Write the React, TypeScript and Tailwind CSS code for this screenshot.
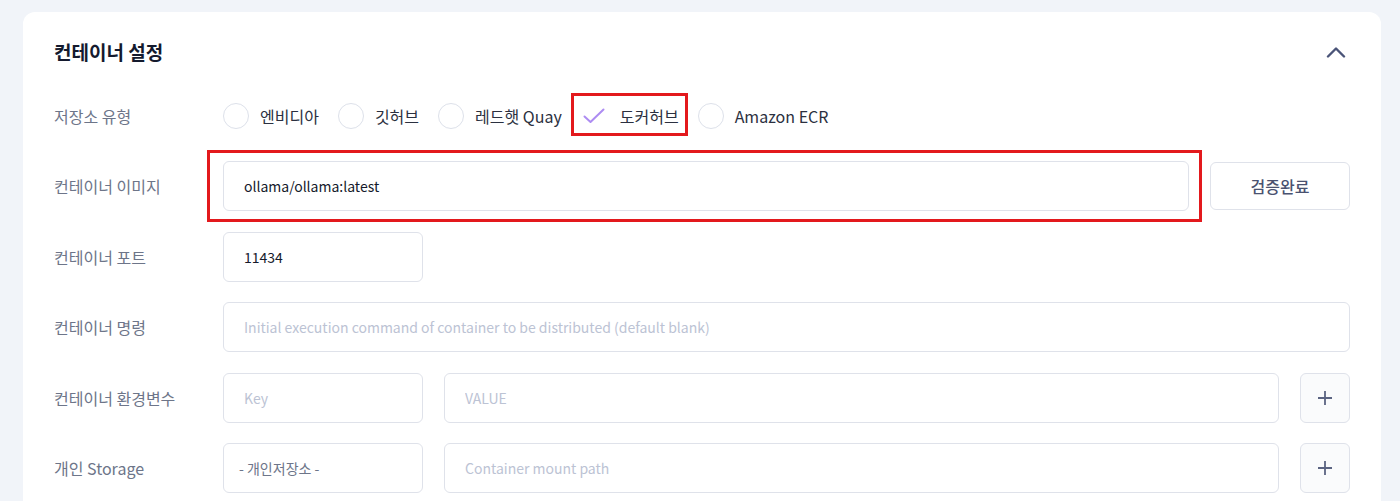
import React from "react";

const registries = [
  { id: "nvidia", label: "엔비디아" },
  { id: "github", label: "깃허브" },
  { id: "redhat", label: "레드햇 Quay" },
  { id: "docker", label: "도커허브" },
  { id: "ecr", label: "Amazon ECR" },
];

const inputBase =
  "h-[50px] rounded-[6px] border border-[#dfe2ea] bg-white px-[20px] text-[14px] text-[#151a2b] placeholder:text-[#bcc3d4] outline-none";

const Row = ({ label, children }: { label: string; children: React.ReactNode }) => (
  <div className="flex items-center">
    <div className="w-[169px] shrink-0 text-[16px] text-[#6d7589]">{label}</div>
    <div className="flex flex-1 items-center">{children}</div>
  </div>
);

const PlusButton = () => (
  <button className="ml-[21px] flex h-[50px] w-[50px] shrink-0 items-center justify-center rounded-[6px] border border-[#dfe2ea] bg-[#fafbfc]">
    <svg width="16" height="16" viewBox="0 0 16 16" fill="none">
      <path d="M8 1v14M1 8h14" stroke="#5b6482" strokeWidth="1.8" />
    </svg>
  </button>
);

const App = () => {
  const selected = "docker";

  return (
    <div className="min-h-[501px] bg-[#f1f4f9] pt-[12px] font-['Noto_Sans_CJK_KR','Noto_Sans',sans-serif]">
      <div className="ml-[23px] w-[1358px] rounded-t-[12px] bg-white px-[31px] pb-[24px]">
        {/* header */}
        <div className="flex h-[80px] items-center justify-between">
          <h2 className="text-[19px] font-bold text-[#141a2e]">컨테이너 설정</h2>
          <svg width="20" height="12" viewBox="0 0 20 12" fill="none" className="mr-[4px]">
            <path d="M2 10.5 10 2.5l8 8" stroke="#4a5478" strokeWidth="2.4" strokeLinecap="round" strokeLinejoin="round" />
          </svg>
        </div>

        <div className="flex flex-col gap-[20.5px]">
          {/* 저장소 유형 */}
          <div className="flex h-[48.5px] items-center">
            <div className="w-[169px] shrink-0 text-[16px] text-[#6d7589]">저장소 유형</div>
            <div className="flex items-center gap-[19px]">
              {registries.map((r) => (
                <label key={r.id} className="relative flex cursor-pointer items-center gap-[11px]">
                  {r.id === selected ? (
                    <>
                      <span className="flex h-[26px] w-[26px] items-center justify-center">
                        <svg width="24" height="18" viewBox="0 0 24 18" fill="none">
                          <path d="M2.5 9.5 8.5 15 21.5 2.5" stroke="#ad8cf2" strokeWidth="2" strokeLinecap="round" strokeLinejoin="round" />
                        </svg>
                      </span>
                      <span className="pl-[2px] text-[16px] text-[#2b3040]">{r.label}</span>
                      <span className="pointer-events-none absolute bottom-[-7px] left-[-10px] right-[-9px] top-[-10px] border-[3px] border-[#e3191d]" />
                    </>
                  ) : (
                    <>
                      <span className="h-[26px] w-[26px] rounded-full border border-[#dde1ea] bg-white" />
                      <span className="text-[16px] text-[#2b3040]">{r.label}</span>
                    </>
                  )}
                </label>
              ))}
            </div>
          </div>

          <Row label="컨테이너 이미지">
            <div className="relative flex-1">
              <input className={`${inputBase} w-full`} defaultValue="ollama/ollama:latest" />
              <span className="pointer-events-none absolute bottom-[-11px] left-[-16px] right-[-13px] top-[-11px] border-[3px] border-[#e3191d]" />
            </div>
            <button className="ml-[21px] h-[48px] w-[140px] shrink-0 rounded-[6px] border border-[#dfe2ea] bg-white text-[16px] font-medium text-[#4a5270]">
              검증완료
            </button>
          </Row>

          <Row label="컨테이너 포트">
            <input className={`${inputBase} w-[200px]`} defaultValue="11434" />
          </Row>

          <Row label="컨테이너 명령">
            <input
              className={`${inputBase} w-full`}
              placeholder="Initial execution command of container to be distributed (default blank)"
            />
          </Row>

          <Row label="컨테이너 환경변수">
            <input className={`${inputBase} w-[200px]`} placeholder="Key" />
            <input className={`${inputBase} ml-[21px] flex-1`} placeholder="VALUE" />
            <PlusButton />
          </Row>

          <Row label="개인 Storage">
            <div className="flex h-[50px] w-[200px] items-center rounded-[6px] border border-[#dfe2ea] bg-white px-[15px] text-[14px] text-[#6d7589]">
              - 개인저장소 -
            </div>
            <input className={`${inputBase} ml-[21px] flex-1`} placeholder="Container mount path" />
            <PlusButton />
          </Row>
        </div>
      </div>
    </div>
  );
};

export default App;
